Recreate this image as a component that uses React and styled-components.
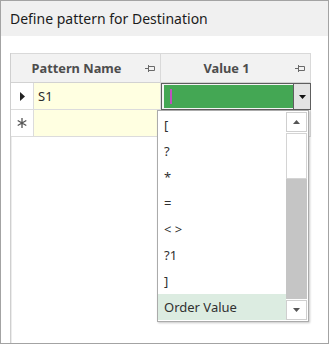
import React from "react";
import styled, { createGlobalStyle } from "styled-components";

const GlobalStyle = createGlobalStyle`
  html, body {
    margin: 0;
    padding: 0;
    background: #fff;
  }
  body {
    font-family: "Noto Sans", "Open Sans", sans-serif;
  }
`;

const Window = styled.div`
  box-sizing: border-box;
  width: 329px;
  height: 344px;
  border: 1px solid #a3a3a3;
  display: flex;
  flex-direction: column;
  background: #fff;
  overflow: hidden;
`;

const TitleBar = styled.div`
  height: 35px;
  flex: none;
  background: #f0f0f0;
  display: flex;
  align-items: center;
  padding-left: 9px;
  font-size: 14px;
  color: #1b1b1b;
`;

const Body = styled.div`
  flex: 1;
  padding: 17px 0 0 9px;
  display: flex;
`;

const Grid = styled.div`
  position: relative;
  flex: 1;
  border-left: 1px solid #cfcfcf;
  box-shadow: inset 1px 0 0 #ececec;
`;

const Row = styled.div`
  display: grid;
  grid-template-columns: ${(p) => p.$cols};
  width: 300px;
  height: ${(p) => p.$h}px;
`;

const HeadCell = styled.div`
  position: relative;
  box-sizing: border-box;
  background: #f2f2f2;
  border-top: 1px solid #d9d9d9;
  border-right: 1px solid #d9d9d9;
  border-bottom: 1px solid #d2d2d2;
  display: flex;
  align-items: center;
  justify-content: center;
  padding-right: 18px;
  font-size: 12.8px;
  font-weight: 700;
  color: #4d4d4d;
`;

const Pin = styled.svg`
  position: absolute;
  right: 5px;
  top: 11px;
`;

const Cell = styled.div`
  box-sizing: border-box;
  background: ${(p) => (p.$yellow ? "#ffffe1" : "#fff")};
  border-right: 1px solid #dcdcdc;
  border-bottom: 1px solid #dcdcdc;
  display: flex;
  align-items: center;
  justify-content: ${(p) => (p.$center ? "center" : "flex-start")};
  padding-left: ${(p) => (p.$center ? 0 : 4)}px;
  font-size: 13px;
  color: #2a2a2a;
`;

const Editor = styled.div`
  box-sizing: border-box;
  border: 1px solid #5e5e5e;
  padding: 1px 0 1px 2px;
  display: flex;
  background: #f4f4f4;
`;

const EditArea = styled.div`
  flex: 1;
  background: #44a754;
  display: flex;
  align-items: center;
  padding-left: 6px;
`;

const Caret = styled.div`
  width: 2px;
  height: 15px;
  background: #c04fc0;
`;

const DropButton = styled.div`
  width: 16px;
  margin: -1px 0;
  border-left: 1px solid #5e5e5e;
  background: #e3e3e3;
  display: flex;
  align-items: center;
  justify-content: center;
`;

const Popup = styled.div`
  position: absolute;
  left: 146px;
  top: 57px;
  box-sizing: border-box;
  width: 152px;
  height: 212px;
  border: 1px solid #ababab;
  background: #fff;
  box-shadow: 1px 1px 2px rgba(0, 0, 0, 0.22);
  display: flex;
`;

const List = styled.div`
  flex: 1;
  padding-top: 1px;
  display: flex;
  flex-direction: column;
`;

const Item = styled.div`
  height: 26px;
  flex: none;
  display: flex;
  align-items: center;
  padding-left: 6px;
  font-size: 13px;
  color: #303030;
  background: ${(p) => (p.$active ? "#dcece1" : "transparent")};
`;

const ScrollBar = styled.div`
  width: 21px;
  margin: 1px 1px 1px 0;
  display: flex;
  flex-direction: column;
  gap: 1px;
  background: #fff;
`;

const ScrollBtn = styled.div`
  box-sizing: border-box;
  height: 20px;
  flex: none;
  border: 1px solid #cfcfcf;
  background: #fff;
  display: flex;
  align-items: center;
  justify-content: center;
`;

const Thumb = styled.div`
  box-sizing: border-box;
  height: 46px;
  flex: none;
  border: 1px solid #d4d4d4;
  background: #fff;
  margin-bottom: -1px;
`;

const Track = styled.div`
  flex: 1;
  background: #c5c5c5;
`;

const PinIcon = () => (
  <Pin width="10" height="7" viewBox="0 0 10 7">
    <path d="M0 3.5H3.5M3.5 0V7M4 1.5H9.5V5.5H4" fill="none" stroke="#6a6a6a" strokeWidth="1" />
  </Pin>
);

const Arrow = ({ up, color = "#4a4a4a" }) => (
  <svg width="7" height="4" viewBox="0 0 7 4">
    <path d={up ? "M0 4L3.5 0L7 4Z" : "M0 0L7 0L3.5 4Z"} fill={color} />
  </svg>
);

const RowMarker = () => (
  <svg width="5" height="9" viewBox="0 0 5 9">
    <path d="M0 0L5 4.5L0 9Z" fill="#222" />
  </svg>
);

const NewRowMarker = () => (
  <svg width="10" height="10" viewBox="0 0 10 10">
    <path d="M5 0V10M0.7 2.5L9.3 7.5M0.7 7.5L9.3 2.5" stroke="#555" strokeWidth="1.3" />
  </svg>
);

const options = ["[", "?", "*", "=", "< >", "?1", "]", "Order Value"];

export default function App() {
  return (
    <>
      <GlobalStyle />
      <Window>
        <TitleBar>Define pattern for Destination</TitleBar>
        <Body>
          <Grid>
            <Row $cols="150px 150px" $h={30}>
              <HeadCell>
                Pattern Name
                <PinIcon />
              </HeadCell>
              <HeadCell>
                Value 1
                <PinIcon />
              </HeadCell>
            </Row>
            <Row $cols="23px 127px 150px" $h={27}>
              <Cell $center>
                <RowMarker />
              </Cell>
              <Cell $yellow>S1</Cell>
              <Editor>
                <EditArea>
                  <Caret />
                </EditArea>
                <DropButton>
                  <Arrow color="#111" />
                </DropButton>
              </Editor>
            </Row>
            <Row $cols="23px 127px 150px" $h={27}>
              <Cell $center>
                <NewRowMarker />
              </Cell>
              <Cell $yellow />
              <Cell />
            </Row>
            <Popup>
              <List>
                {options.map((o, i) => (
                  <Item key={o} $active={i === options.length - 1}>
                    {o}
                  </Item>
                ))}
              </List>
              <ScrollBar>
                <ScrollBtn>
                  <Arrow up color="#555" />
                </ScrollBtn>
                <Thumb />
                <Track />
                <ScrollBtn>
                  <Arrow color="#555" />
                </ScrollBtn>
              </ScrollBar>
            </Popup>
          </Grid>
        </Body>
      </Window>
    </>
  );
}
